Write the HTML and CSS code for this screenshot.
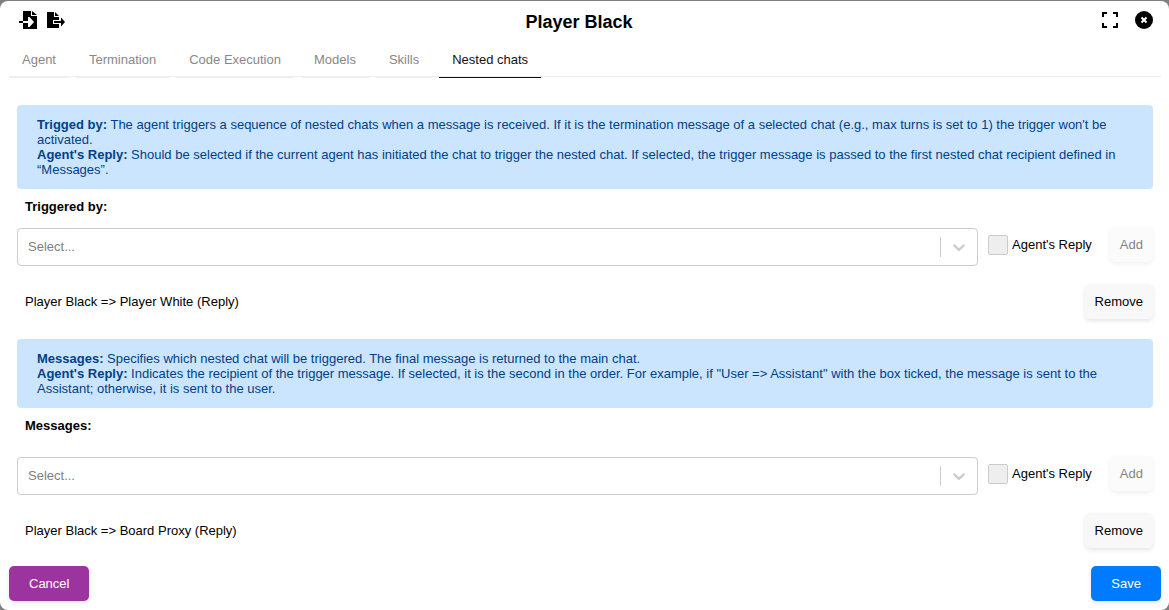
FILE: index.html
```html
<!DOCTYPE html>
<html lang="en">
<head>
<meta charset="utf-8">
<title>Player Black</title>
<link rel="stylesheet" href="styles.css">
</head>
<body>
<div class="dialog" role="dialog" aria-labelledby="dialog-title">
  <header class="header">
    <div class="header-actions">
      <button class="icon-button" type="button" aria-label="Import">
        <svg class="icon" viewBox="0 0 18 18"><path d="M4 0h8v5h6v13H4zM13 0l5 4h-5zM0 10h4v2H0z"/><path fill="#fff" d="M4 10h5V6h1.500l4.500 5-4.500 5H9v-4H4z"/></svg>
      </button>
      <button class="icon-button" type="button" aria-label="Export">
        <svg class="icon" viewBox="0 0 18 18"><path d="M0 1h7v5h5v3H6v4h6v4H0zM8 1l4 4H8zM7 10h7V6.500l4 4.500-4 4.500V12H7z"/></svg>
      </button>
    </div>
    <h1 class="title" id="dialog-title">Player Black</h1>
    <div class="header-actions header-actions-end">
      <button class="icon-button" type="button" aria-label="Full screen">
        <svg class="icon" viewBox="0 0 18 18"><path fill="none" stroke="#000" stroke-width="2" d="M2 6V2h4M12 2h4v4M16 12v4h-4M6 16H2v-4"/></svg>
      </button>
      <button class="icon-button" type="button" aria-label="Close">
        <svg class="icon" viewBox="0 0 18 18"><circle cx="9" cy="9" r="9"/><path stroke="#fff" stroke-width="2" d="M6.500 6.500l5 5M11.500 6.500l-5 5"/></svg>
      </button>
    </div>
  </header>
  <nav class="tabs" role="tablist">
    <button class="tab" role="tab" type="button">Agent</button>
    <button class="tab" role="tab" type="button">Termination</button>
    <button class="tab" role="tab" type="button">Code Execution</button>
    <button class="tab" role="tab" type="button">Models</button>
    <button class="tab" role="tab" type="button">Skills</button>
    <button class="tab tab-active" role="tab" type="button" aria-selected="true">Nested chats</button>
  </nav>
  <main class="content">
    <section class="section">
      <div class="info">
        <p><strong>Trigged by:</strong> The agent triggers a sequence of nested chats when a message is received. If it is the termination message of a selected chat (e.g., max turns is set to 1) the trigger won't be activated.</p>
        <p><strong>Agent's Reply:</strong> Should be selected if the current agent has initiated the chat to trigger the nested chat. If selected, the trigger message is passed to the first nested chat recipient defined in “Messages”.</p>
      </div>
      <label class="section-label" for="trigger">Triggered by:</label>
      <div class="picker">
        <div class="select-box">
          <select class="select" id="trigger"><option>Select...</option></select>
          <span class="indicator"><svg class="chevron" viewBox="0 0 20 20"><path d="M4.516 7.548c.436-.446 1.043-.481 1.576 0L10 11.295l3.908-3.747c.533-.481 1.141-.446 1.574 0 .436.445.408 1.197 0 1.615-.406.418-4.695 4.502-4.695 4.502a1.095 1.095 0 0 1-1.576 0S4.924 9.581 4.516 9.163s-.436-1.17 0-1.615z"/></svg></span>
        </div>
        <label class="check"><input class="checkbox" type="checkbox">Agent's Reply</label>
        <button class="button" type="button" disabled>Add</button>
      </div>
      <div class="entry"><span>Player Black =&gt; Player White (Reply)</span><button class="button" type="button">Remove</button></div>
    </section>
    <section class="section">
      <div class="info">
        <p><strong>Messages:</strong> Specifies which nested chat will be triggered. The final message is returned to the main chat.</p>
        <p><strong>Agent's Reply:</strong> Indicates the recipient of the trigger message. If selected, it is the second in the order. For example, if "User =&gt; Assistant" with the box ticked, the message is sent to the Assistant; otherwise, it is sent to the user.</p>
      </div>
      <label class="section-label section-label-spaced" for="messages">Messages:</label>
      <div class="picker">
        <div class="select-box">
          <select class="select" id="messages"><option>Select...</option></select>
          <span class="indicator"><svg class="chevron" viewBox="0 0 20 20"><path d="M4.516 7.548c.436-.446 1.043-.481 1.576 0L10 11.295l3.908-3.747c.533-.481 1.141-.446 1.574 0 .436.445.408 1.197 0 1.615-.406.418-4.695 4.502-4.695 4.502a1.095 1.095 0 0 1-1.576 0S4.924 9.581 4.516 9.163s-.436-1.17 0-1.615z"/></svg></span>
        </div>
        <label class="check"><input class="checkbox" type="checkbox">Agent's Reply</label>
        <button class="button" type="button" disabled>Add</button>
      </div>
      <div class="entry"><span>Player Black =&gt; Board Proxy (Reply)</span><button class="button" type="button">Remove</button></div>
    </section>
  </main>
  <footer class="footer">
    <button class="button button-cancel" type="button">Cancel</button>
    <button class="button button-save" type="button">Save</button>
  </footer>
</div>
</body>
</html>
```
FILE: styles.css
```css
* { box-sizing: border-box; }
body {
  margin: 0;
  padding-top: 1px;
  background: #807f80;
  color: #000;
  font: 13px/15px "Liberation Sans", Arial, sans-serif;
}
button, select, input { font: inherit; color: inherit; margin: 0; }
p { margin: 0; }
.dialog {
  min-height: calc(100vh - 1px);
  padding: 8px 8px 9px 9px;
  background: #fff;
  border-radius: 8px;
  display: flex;
  flex-direction: column;
}
.header {
  display: flex;
  justify-content: space-between;
  align-items: center;
  height: 26px;
  padding: 0 8px 0 10px;
}
.header-actions { display: flex; gap: 10px; padding-bottom: 4px; }
.header-actions-end { gap: 16px; }
.icon-button { padding: 0; border: 0; background: none; }
.icon { display: block; width: 18px; height: 18px; }
.title { margin: 0 8px 0 0; font-size: 18px; line-height: 24px; }
.tabs {
  display: flex;
  gap: 7px;
  height: 42px;
  border-bottom: 1px solid #eee;
}
.tab {
  padding: 6px 13px 0;
  height: 43px;
  border: 0;
  border-bottom: 1px solid #eee;
  background: none;
  color: #888;
}
.tab-active { border-bottom-color: #111; color: #111; }
.content { padding: 28px 8px 0; }
.info {
  padding: 12px 20px;
  border-radius: 4px;
  background: #cce5ff;
  color: #004085;
}
.section-label { display: block; padding: 10px 8px 13px; font-weight: bold; }
.section-label-spaced { padding-bottom: 23px; }
.picker { display: flex; align-items: flex-start; gap: 10px; }
.select-box { position: relative; flex: 1; margin-top: 1px; }
.select {
  appearance: none;
  display: block;
  width: 100%;
  height: 38px;
  padding: 0 48px 2px 10px;
  border: 1px solid #ccc;
  border-radius: 4px;
  background: #fff;
  color: #808080;
}
.indicator {
  position: absolute;
  top: 9px;
  right: 1px;
  bottom: 9px;
  padding: 0 8px;
  border-left: 1px solid #ccc;
  display: flex;
  align-items: center;
  pointer-events: none;
}
.chevron { width: 20px; height: 20px; fill: #ccc; }
.check { display: flex; align-items: center; gap: 4px; height: 35px; margin-right: 8px; }
.checkbox {
  appearance: none;
  width: 20px;
  height: 20px;
  border: 1px solid #ccc;
  border-radius: 2px;
  background: #eee;
}
.button {
  height: 35px;
  padding: 0 10px;
  border: 0;
  border-radius: 5px;
  background: #f8f8f8;
  box-shadow: 0 2px 4px rgba(0, 0, 0, .1);
}
.button:disabled { opacity: .5; }
.entry {
  display: flex;
  justify-content: space-between;
  align-items: center;
  padding: 18px 0 20px 8px;
}
.footer { display: flex; justify-content: space-between; margin-top: -2px; }
.button-cancel, .button-save { padding: 0 20px; color: #fff; }
.button-cancel { background: #9c349f; }
.button-save { background: #007bff; }
```
